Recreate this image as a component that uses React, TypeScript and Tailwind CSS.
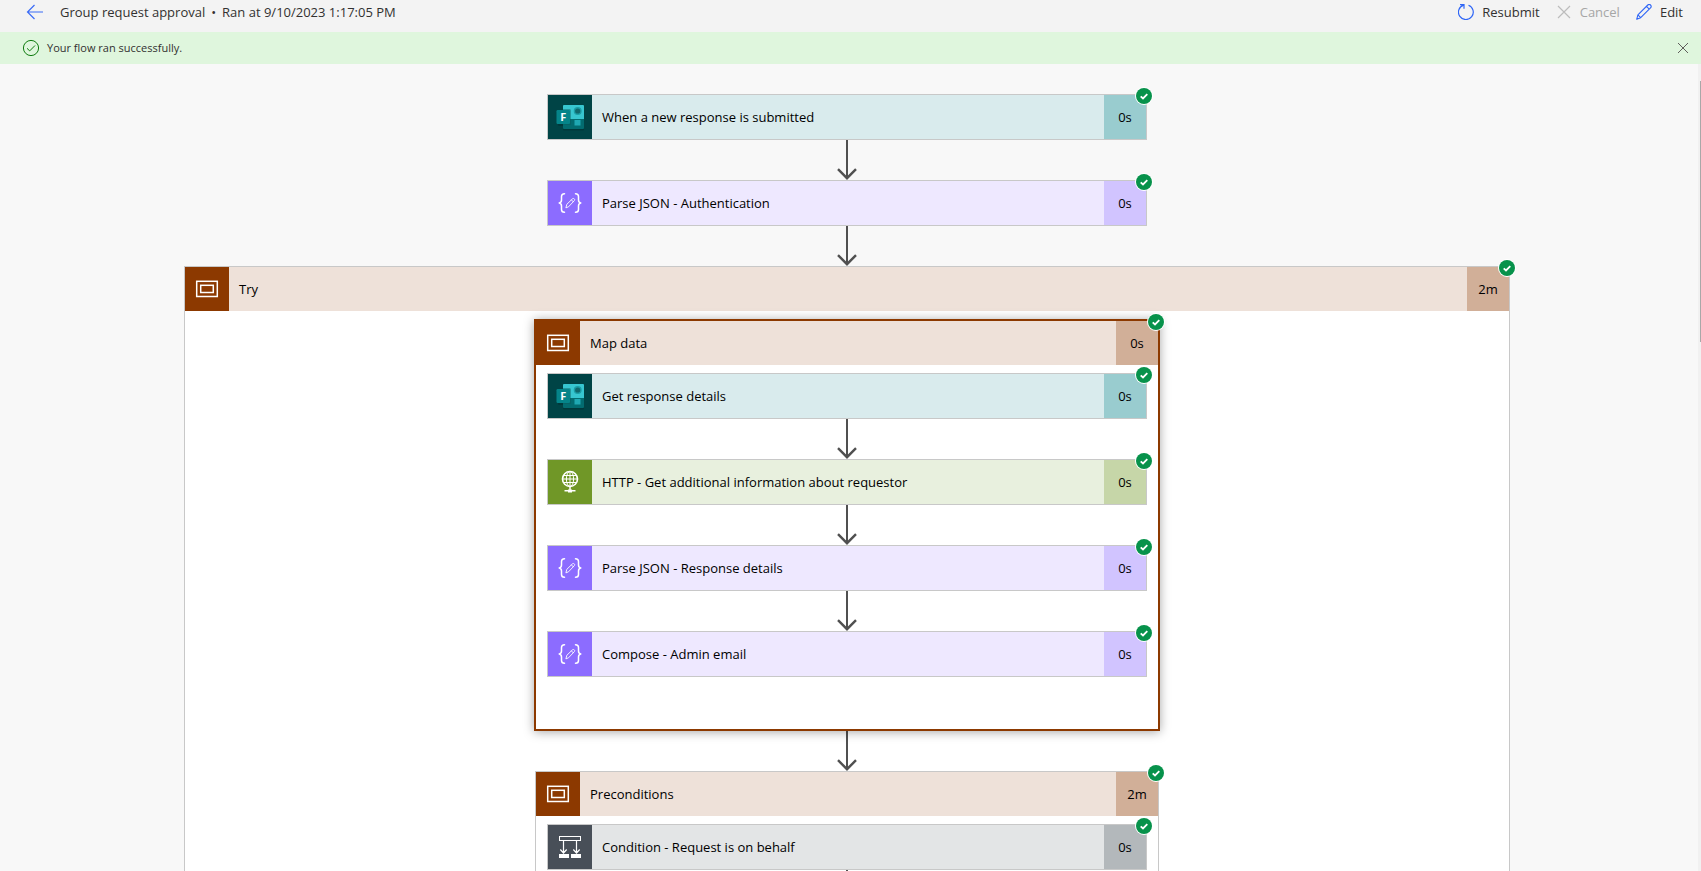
import type { ReactNode } from "react";

type Kind = "forms" | "data" | "http" | "condition" | "scope";

const tones: Record<Kind, { icon: string; bar: string; time: string }> = {
  forms: { icon: "bg-[#004446]", bar: "bg-[#d9ebed]", time: "bg-[#99cccf]" },
  data: { icon: "bg-[#8c6cff]", bar: "bg-[#eee8ff]", time: "bg-[#d1c4ff]" },
  http: { icon: "bg-[#709727]", bar: "bg-[#e8f0de]", time: "bg-[#c6d6a8]" },
  condition: { icon: "bg-[#484f58]", bar: "bg-[#e3e5e6]", time: "bg-[#b3b8bb]" },
  scope: { icon: "bg-[#8c3900]", bar: "bg-[#eee1d9]", time: "bg-[#d1af98]" },
};

function KindIcon({ kind }: { kind: Kind }) {
  return (
    <svg viewBox="0 0 44 44" className="size-11" fill="none" aria-hidden="true">
      {kind === "forms" && (
        <>
          <rect x="10" y="17" width="13" height="14" rx="1.5" fill="#002e30" opacity=".5" />
          <rect x="15" y="30" width="21" height="5.5" rx="1" fill="#002e30" opacity=".5" />
          <path d="M16 10h19a1 1 0 0 1 1 1v13H15V11a1 1 0 0 1 1-1z" fill="#37c6d0" />
          <path d="M15 24h21v9a1 1 0 0 1-1 1H16a1 1 0 0 1-1-1z" fill="#036c70" />
          <path d="M15 14h6.500a1.500 1.500 0 0 1 1.500 1.500V30h-8z" fill="#0a5a5e" opacity=".45" />
          <circle cx="29.700" cy="16" r="3.300" fill="#10686d" stroke="#1b9da5" strokeWidth="1.400" />
          <rect x="26.500" y="25" width="6" height="5.500" fill="#1fa8b2" />
          <rect x="8.500" y="15" width="13.500" height="14" rx="1.200" fill="#058489" />
          <text x="15.300" y="26" textAnchor="middle" fill="#fff" fontSize="11" fontWeight="700" fontFamily="Open Sans, sans-serif">F</text>
        </>
      )}
      {kind === "data" && (
        <g stroke="#fff" strokeLinecap="round" strokeLinejoin="round">
          <path strokeWidth="1.500" d="M16.500 12.700c-2.300 0-3 .9-3 2.800v3.500c0 1.800-.8 2.800-2.300 3 1.500.2 2.300 1.200 2.300 3v3.500c0 1.900.7 2.800 3 2.800M27.500 12.700c2.300 0 3 .9 3 2.800v3.500c0 1.800.8 2.800 2.300 3-1.500.2-2.300 1.200-2.300 3v3.500c0 1.900-.7 2.800-3 2.800" />
          <path strokeWidth="1" opacity=".9" d="M18 26.500l.8-3.200 5.600-5.400c.7-.6 1.400-.5 1.900 0s.5 1.200-.1 1.900l-5.400 5.700zM23.500 19l1.800 1.800" />
        </g>
      )}
      {kind === "http" && (
        <g stroke="#fff">
          <circle cx="22" cy="19" r="7.500" strokeWidth="1.600" />
          <ellipse cx="22" cy="19" rx="3.600" ry="7.500" strokeWidth="1" />
          <path strokeWidth="1" d="M22 11.500v15M14.500 19h15M16 15.500h12M16 22.500h12" />
          <path strokeWidth="1.500" d="M22 26.500v5M16.500 30.800h11" />
          <path strokeWidth="3" d="M20 31h4" />
        </g>
      )}
      {kind === "condition" && (
        <g stroke="#fff">
          <rect x="11.500" y="11.500" width="21" height="4" />
          <path strokeWidth="1.200" d="M15.500 16v12M28.500 16v12M12.300 24.500l3.200 3.500 3.200-3.500M25.300 24.500l3.200 3.500 3.200-3.500" />
          <path stroke="none" fill="#fff" d="M11 29h10v4H11zM23 29h10v4H23z" />
        </g>
      )}
      {kind === "scope" && (
        <g stroke="#fff" strokeWidth="1.500">
          <rect x="11.700" y="14.300" width="20.600" height="15.200" />
          <rect x="15.700" y="18.300" width="12.600" height="7.200" />
        </g>
      )}
    </svg>
  );
}

function Badge() {
  return (
    <svg viewBox="0 0 18 18" className="absolute -top-2 -right-[7px] size-[18px]" role="img" aria-label="Succeeded">
      <circle cx="9" cy="9" r="9" fill="#fff" />
      <circle cx="9" cy="9" r="8" fill="#07924b" />
      <path d="M5.700 9.300l2.300 2.200 4.300-4.400" fill="none" stroke="#fff" strokeWidth="1.800" />
    </svg>
  );
}

function Bar({ kind, title, time }: { kind: Kind; title: string; time: string }) {
  const tone = tones[kind];
  return (
    <button type="button" className={`flex h-11 w-full items-center text-left ${tone.bar}`}>
      <span className={`size-11 shrink-0 ${tone.icon}`}>
        <KindIcon kind={kind} />
      </span>
      <span className="flex-1 truncate px-2.5">{title}</span>
      <span className={`flex h-11 w-[42px] shrink-0 items-center justify-center ${tone.time}`}>{time}</span>
    </button>
  );
}

function Card({ kind, title, time = "0s" }: { kind: Kind; title: string; time?: string }) {
  return (
    <div className="relative w-full max-w-[600px] border border-[#c8c8c8]">
      <Bar kind={kind} title={title} time={time} />
      <Badge />
    </div>
  );
}

function Arrow() {
  return (
    <svg viewBox="0 0 20 40" className="h-10 w-5 shrink-0" fill="none" stroke="#505050" strokeWidth="2" aria-hidden="true">
      <path d="M10 0v38" />
      <path d="M1 29.200l9 9 9-9" strokeWidth="2.400" />
    </svg>
  );
}

function Scope({ title, time, className, children }: { title: string; time: string; className: string; children: ReactNode }) {
  return (
    <section className={`relative w-full bg-white ${className}`}>
      <Bar kind="scope" title={title} time={time} />
      <Badge />
      <div className="flex flex-col items-center px-[11px] pt-2">{children}</div>
    </section>
  );
}

export default function App() {
  return (
    <div className="flex h-screen flex-col overflow-hidden bg-[#f8f8f8] font-['Open_Sans','Noto_Sans',sans-serif] text-[13px] leading-5 text-black">
      <header className="flex h-8 shrink-0 items-center justify-between bg-[#f3f3f3] pr-[18px] pb-2 pl-[26px] text-[#323130]">
        <div className="flex items-center gap-4">
          <button type="button" aria-label="Back">
            <svg viewBox="0 0 18 16" className="h-4 w-[18px]" fill="none" stroke="#3b6cf6" strokeWidth="1.200">
              <path d="M8.500 1L1.500 8l7 7M1.500 8H17" />
            </svg>
          </button>
          <h1 className="flex items-center gap-1.5">
            <span>Group request approval</span>
            <span>•</span>
            <span>Ran at 9/10/2023 1:17:05 PM</span>
          </h1>
        </div>
        <div className="flex items-center gap-4">
          <button type="button" className="flex items-center gap-2">
            <svg viewBox="0 0 16 16" className="size-4" fill="none" stroke="#2f66f6" strokeWidth="1.200">
              <path d="M10.500 1.200A7.400 7.400 0 1 1 5.500 1.100M2 .7h4v4" />
            </svg>
            Resubmit
          </button>
          <button type="button" disabled className="flex items-center gap-2 text-[#a6a6a6]">
            <svg viewBox="0 0 16 16" className="size-4" fill="none" stroke="#bcbcbc" strokeWidth="1.200">
              <path d="M2 2l12 12M14 2L2 14" />
            </svg>
            Cancel
          </button>
          <button type="button" className="flex items-center gap-2">
            <svg viewBox="0 0 16 16" className="size-4" fill="none" stroke="#2f66f6" strokeWidth="1.100" strokeLinejoin="round">
              <path d="M.7 15.300l1.200-4.500L11.800 1c.9-.8 2-.7 2.700 0s.9 1.900 0 2.800l-9.800 9.900zM10.500 2.300l3 3M1.900 10.800l3 3" />
            </svg>
            Edit
          </button>
        </div>
      </header>

      <div role="status" className="flex h-8 shrink-0 items-center bg-[#dff6dd] pr-3 pl-[22px] text-[11px] text-[#323130]">
        <svg viewBox="0 0 18 18" className="mr-[7px] size-[18px]" fill="none" stroke="#107c10" aria-hidden="true">
          <circle cx="9" cy="9" r="7.600" />
          <path d="M5 9.300l2.700 2.600 5.300-5.400" />
        </svg>
        <span className="flex-1">Your flow ran successfully.</span>
        <button type="button" aria-label="Dismiss">
          <svg viewBox="0 0 12 12" className="size-3" fill="none" stroke="#605e5c">
            <path d="M1 1l10 10M11 1L1 11" />
          </svg>
        </button>
      </div>

      <div className="flex min-h-0 flex-1">
        <main className="min-w-0 flex-1 overflow-hidden pr-1">
          <div className="mx-auto flex w-full max-w-[1326px] flex-col items-center pt-[30px]">
            <Card kind="forms" title="When a new response is submitted" />
            <Arrow />
            <Card kind="data" title="Parse JSON - Authentication" />
            <Arrow />
            <Scope title="Try" time="2m" className="border border-[#c8c8c8]">
              <Scope
                title="Map data"
                time="0s"
                className="max-w-[626px] border-2 border-[#8c3900] pb-[52px] shadow-[0_1px_10px_rgba(0,0,0,0.35)]"
              >
                <Card kind="forms" title="Get response details" />
                <Arrow />
                <Card kind="http" title="HTTP - Get additional information about requestor" />
                <Arrow />
                <Card kind="data" title="Parse JSON - Response details" />
                <Arrow />
                <Card kind="data" title="Compose - Admin email" />
              </Scope>
              <Arrow />
              <Scope title="Preconditions" time="2m" className="max-w-[624px] border border-[#c8c8c8]">
                <Card kind="condition" title="Condition - Request is on behalf" />
                <Arrow />
              </Scope>
            </Scope>
          </div>
        </main>
        <div className="flex w-[3px] justify-end bg-[#f1f1f1] pt-[17px]" aria-hidden="true">
          <div className="h-[261px] w-px bg-[#a8a8a8]" />
        </div>
      </div>
    </div>
  );
}
